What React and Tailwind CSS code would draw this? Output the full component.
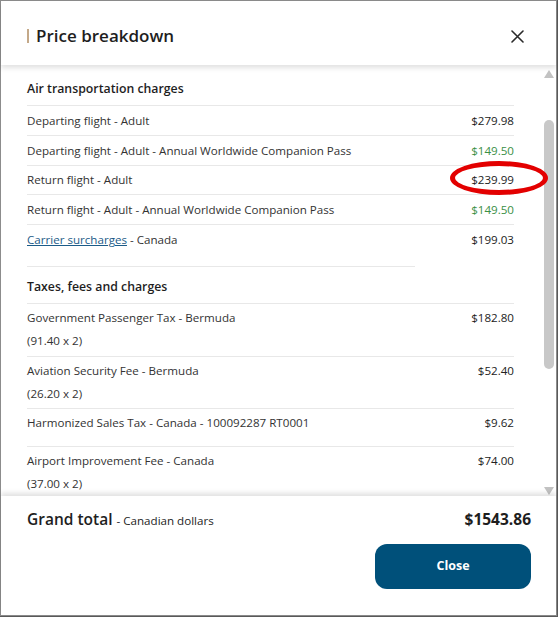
import React from "react";

const font = { fontFamily: '"Open Sans", "Noto Sans", sans-serif' };

function Row({ label, amount, green, h = "h-[30px]" }) {
  return (
    <div className={`flex items-center justify-between border-t border-[#e8e8e8] text-[11.6px] text-[#333] ${h}`}>
      <span>{label}</span>
      <span className={green ? "text-[#3a8f46]" : "text-[#222]"}>{amount}</span>
    </div>
  );
}

function TaxRow({ label, sub, amount, h }) {
  return (
    <div className={`flex justify-between border-t border-[#e8e8e8] pt-[2px] text-[11.6px] leading-[23px] text-[#333] ${h}`}>
      <div className="flex flex-col">
        <span>{label}</span>
        {sub && <span>{sub}</span>}
      </div>
      <span className="text-[#222]">{amount}</span>
    </div>
  );
}

export default function App() {
  return (
    <div className="relative flex h-[617px] w-[558px] bg-[#5a5a5a]" style={font}>
      <div className="flex h-[616px] w-[557px] flex-col border border-[#8c8c8c] bg-white">
        {/* Header */}
        <div className="relative z-10 flex h-[64px] shrink-0 items-center justify-between pl-[26px] pr-[32px] pt-[6px] shadow-[0_3px_5px_rgba(0,0,0,0.12)]">
          <div className="flex items-center">
            <div className="h-[14px] w-[2px] bg-[#c4a989]" />
            <h1 className="ml-[7px] text-[17px] font-semibold text-[#1e1e1e]">Price breakdown</h1>
          </div>
          <svg width="13" height="13" viewBox="0 0 13 13">
            <path d="M1 1 L12 12 M12 1 L1 12" stroke="#2a2a2a" strokeWidth="1.6" strokeLinecap="round" />
          </svg>
        </div>

        {/* Scroll area */}
        <div className="flex h-[431px] shrink-0 overflow-hidden">
          <div className="flex-1 overflow-hidden pl-[26px] pr-[28px]">
            <div className="pb-[8px] pt-[16px] text-[12.3px] font-semibold leading-[16px] text-[#1e1e1e]">
              Air transportation charges
            </div>
            <Row label="Departing flight - Adult" amount="$279.98" />
            <Row label="Departing flight - Adult - Annual Worldwide Companion Pass" amount="$149.50" green />
            <Row label="Return flight - Adult" amount="$239.99" h="h-[29px]" />
            <Row label="Return flight - Adult - Annual Worldwide Companion Pass" amount="$149.50" green />
            <div className="flex h-[33px] items-center justify-between border-t border-[#e8e8e8] pb-[2px] text-[11.6px] text-[#333]">
              <span>
                <span className="text-[#1b5b88] underline">Carrier surcharges</span> - Canada
              </span>
              <span className="text-[#222]">$199.03</span>
            </div>
            <div className="mt-[9px] h-px w-[388px] bg-[#e8e8e8]" />
            <div className="pb-[8px] pt-[12px] text-[12.3px] font-semibold leading-[16px] text-[#1e1e1e]">
              Taxes, fees and charges
            </div>
            <TaxRow label="Government Passenger Tax - Bermuda" sub="(91.40 x 2)" amount="$182.80" h="h-[53px]" />
            <TaxRow label="Aviation Security Fee - Bermuda" sub="(26.20 x 2)" amount="$52.40" h="h-[52px]" />
            <TaxRow label="Harmonized Sales Tax - Canada - 100092287 RT0001" amount="$9.62" h="h-[38px]" />
            <TaxRow label="Airport Improvement Fee - Canada" sub="(37.00 x 2)" amount="$74.00" h="h-[53px]" />
          </div>
          {/* Scrollbar */}
          <div className="flex w-[14px] shrink-0 flex-col items-center pt-[5px]">
            <svg width="10" height="8" viewBox="0 0 10 8">
              <path d="M5 0 L10 8 L0 8 Z" fill="#c2c2c2" />
            </svg>
            <div className="mt-[42px] h-[249px] w-[10px] rounded-full bg-[#c8c8c8]" />
            <div className="flex-1" />
            <svg width="10" height="8" viewBox="0 0 10 8" className="mb-[1px]">
              <path d="M0 0 L10 0 L5 8 Z" fill="#c2c2c2" />
            </svg>
          </div>
        </div>

        {/* Footer */}
        <div className="relative flex flex-1 flex-col pl-[26px] pr-[25px] shadow-[0_-3px_5px_rgba(0,0,0,0.12)]">
          <div className="mt-[12px] flex items-center justify-between">
            <div className="flex items-baseline text-[#1e1e1e]">
              <span className="text-[15.5px] font-semibold">Grand total</span>
              <span className="ml-[4px] text-[11.6px]">- Canadian dollars</span>
            </div>
            <span className="text-[15.5px] font-bold text-[#1e1e1e]">$1543.86</span>
          </div>
          <div className="mt-[13px] flex justify-end">
            <button className="flex h-[45px] w-[156px] items-center justify-center rounded-[12px] bg-[#00507a] text-[12.5px] font-bold text-white">
              Close
            </button>
          </div>
        </div>
      </div>

      {/* Red annotation ellipse */}
      <div className="pointer-events-none absolute left-[450px] top-[161px] h-[34px] w-[98px] rounded-[50%] border-[5px] border-[#e30000]" />
    </div>
  );
}
